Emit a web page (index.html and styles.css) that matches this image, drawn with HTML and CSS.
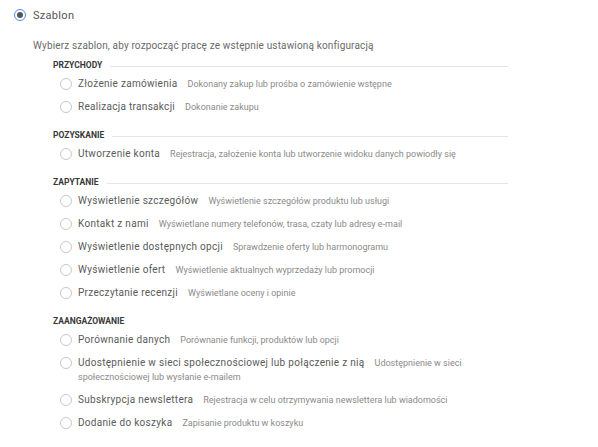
FILE: index.html
```html
<!DOCTYPE html>
<html lang="pl">
<head>
    <meta charset="UTF-8">
    <title>Szablon celu</title>
    <link rel="stylesheet" href="styles.css">
</head>
<body>
<div class="tpl">
    <label class="tpl-head">
        <span class="radio on"></span>
        <span class="tpl-title">Szablon</span>
    </label>
    <p class="tpl-desc">Wybierz szablon, aby rozpocząć pracę ze wstępnie ustawioną konfiguracją</p>

    <div class="group">
        <div class="group-name"><span>Przychody</span></div>
        <label class="opt"><span class="radio"></span><span class="opt-text"><b>Złożenie zamówienia</b><i>Dokonany zakup lub prośba o zamówienie wstępne</i></span></label>
        <label class="opt"><span class="radio"></span><span class="opt-text"><b>Realizacja transakcji</b><i>Dokonanie zakupu</i></span></label>
    </div>

    <div class="group">
        <div class="group-name"><span>Pozyskanie</span></div>
        <label class="opt"><span class="radio"></span><span class="opt-text"><b>Utworzenie konta</b><i>Rejestracja, założenie konta lub utworzenie widoku danych powiodły się</i></span></label>
    </div>

    <div class="group">
        <div class="group-name"><span>Zapytanie</span></div>
        <label class="opt"><span class="radio"></span><span class="opt-text"><b>Wyświetlenie szczegółów</b><i>Wyświetlenie szczegółów produktu lub usługi</i></span></label>
        <label class="opt"><span class="radio"></span><span class="opt-text"><b>Kontakt z nami</b><i>Wyświetlane numery telefonów, trasa, czaty lub adresy e-mail</i></span></label>
        <label class="opt"><span class="radio"></span><span class="opt-text"><b>Wyświetlenie dostępnych opcji</b><i>Sprawdzenie oferty lub harmonogramu</i></span></label>
        <label class="opt"><span class="radio"></span><span class="opt-text"><b>Wyświetlenie ofert</b><i>Wyświetlenie aktualnych wyprzedaży lub promocji</i></span></label>
        <label class="opt"><span class="radio"></span><span class="opt-text"><b>Przeczytanie recenzji</b><i>Wyświetlane oceny i opinie</i></span></label>
    </div>

    <div class="group">
        <div class="group-name plain"><span>Zaangażowanie</span></div>
        <label class="opt"><span class="radio"></span><span class="opt-text"><b>Porównanie danych</b><i>Porównanie funkcji, produktów lub opcji</i></span></label>
        <label class="opt"><span class="radio"></span><span class="opt-text"><b>Udostępnienie w sieci społecznościowej lub połączenie z nią</b><i>Udostępnienie w sieci społecznościowej lub wysłanie e-mailem</i></span></label>
        <label class="opt"><span class="radio"></span><span class="opt-text"><b>Subskrypcja newslettera</b><i>Rejestracja w celu otrzymywania newslettera lub wiadomości</i></span></label>
        <label class="opt"><span class="radio"></span><span class="opt-text"><b>Dodanie do koszyka</b><i>Zapisanie produktu w koszyku</i></span></label>
    </div>
</div>
</body>
</html>
```

FILE: styles.css
```css
body {
    margin: 0;
    background: #fff;
    font-family: Roboto, "Noto Sans", sans-serif;
    color: #555;
}

.tpl {
    width: 508px;
    padding: 8px 0 0 14px;
    box-sizing: border-box;
}

.radio {
    display: inline-block;
    flex: none;
    width: 12px;
    height: 12px;
    border: 1px solid #c8c8c8;
    border-radius: 50%;
    box-sizing: border-box;
    position: relative;
}

.radio.on {
    border: 1px solid #4a8af4;
}

.radio.on:after {
    content: "";
    position: absolute;
    left: 2px;
    top: 2px;
    width: 6px;
    height: 6px;
    border-radius: 50%;
    background: #555;
}

.tpl-head {
    display: flex;
    align-items: center;
    gap: 7px;
    height: 14px;
}

.tpl-title {
    font-size: 11px;
    letter-spacing: 0.3px;
    color: #555;
}

.tpl-desc {
    margin: 17px 0 0 19px;
    font-size: 10px;
    line-height: 14px;
    letter-spacing: 0.15px;
    color: #6a6a6a;
}

.group {
    margin: 5px 0 0 39px;
}

.group + .group {
    margin-top: 10px;
}

.group-name {
    display: flex;
    align-items: center;
    gap: 8px;
    height: 14px;
    font-size: 8.5px;
    font-weight: bold;
    text-transform: uppercase;
    color: #383838;
}

.group-name:after {
    content: "";
    flex: 1;
    height: 1px;
    background: #e4e4e4;
    margin-top: 2px;
}

.group-name.plain:after {
    display: none;
}

.opt {
    display: flex;
    align-items: flex-start;
    gap: 6px;
    padding: 5px 0 4px 7px;
}

.opt .radio {
    margin-top: 1px;
}

.opt-text {
    font-size: 10px;
    line-height: 14px;
}

.opt-text b {
    font-weight: normal;
    letter-spacing: 0.3px;
    color: #5a5a5a;
    margin-right: 10px;
}

.opt-text i {
    font-style: normal;
    font-size: 9px;
    color: #8a8a8a;
}
```
